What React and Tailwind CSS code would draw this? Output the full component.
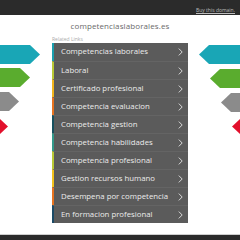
import React from 'react';

const links = [
  { label: 'Competencias laborales', color: '#1a9fae' },
  { label: 'Laboral', color: '#b9c935' },
  { label: 'Certificado profesional', color: '#f2b51c' },
  { label: 'Competencia evaluacion', color: '#e8731f' },
  { label: 'Competencia gestion', color: '#17505e' },
  { label: 'Competencia habilidades', color: '#33998a' },
  { label: 'Competencia profesional', color: '#b9c935' },
  { label: 'Gestion recursos humano', color: '#f2c21c' },
  { label: 'Desempena por competencia', color: '#e8731f' },
  { label: 'En formacion profesional', color: '#1b4a66' },
];

function Arrows() {
  const left = [
    { y: 45, tip: 40, c: '#19a6b6' },
    { y: 68, tip: 30, c: '#5aac2e' },
    { y: 92, tip: 19, c: '#8b8b8b' },
    { y: 117, tip: 8, c: '#e2102c' },
  ];
  const right = [
    { y: 45, tip: 199, c: '#19a6b6' },
    { y: 69, tip: 210, c: '#5aac2e' },
    { y: 93, tip: 221, c: '#8b8b8b' },
    { y: 117, tip: 232, c: '#e2102c' },
  ];
  const h = 19;
  return (
    <svg className="absolute inset-0 pointer-events-none" width="240" height="240" viewBox="0 0 240 240">
      {left.map((a) => (
        <polygon
          key={'l' + a.y}
          fill={a.c}
          points={`-20,${a.y} ${a.tip - 10},${a.y} ${a.tip},${a.y + h / 2} ${a.tip - 10},${a.y + h} -20,${a.y + h}`}
        />
      ))}
      {right.map((a) => (
        <polygon
          key={'r' + a.y}
          fill={a.c}
          points={`260,${a.y} ${a.tip + 10},${a.y} ${a.tip},${a.y + h / 2} ${a.tip + 10},${a.y + h} 260,${a.y + h}`}
        />
      ))}
    </svg>
  );
}

function Chevron() {
  return (
    <svg width="5" height="8" viewBox="0 0 5 8" fill="none" stroke="#d8d8d8" strokeWidth="1">
      <path d="M0.8 0.6 L4.2 4 L0.8 7.4" />
    </svg>
  );
}

export default function App() {
  return (
    <div
      className="relative w-[240px] h-[240px] bg-white overflow-hidden flex flex-col"
      style={{ fontFamily: '"Open Sans", "Liberation Sans", sans-serif' }}
    >
      <Arrows />
      <div className="relative h-[15px] bg-[#2b2b2b] flex justify-end items-end pr-[5px] pb-[2px]">
        <span className="text-[5px] leading-none text-[#bdbdbd] underline">Buy this domain.</span>
      </div>
      <div className="relative flex-1 flex flex-col items-center">
        <div className="mt-[5px] text-[8px] leading-[12px] text-[#6a6a6a] tracking-[0.1px]">
          competenciaslaborales.es
        </div>
        <div className="w-[136px] mt-[4px]">
          <div className="text-[5px] leading-[6px] text-[#aaaaaa]">Related Links</div>
          <div className="mt-[1px] bg-[#5b5b5b] flex flex-col">
            {links.map((l, i) => (
              <div
                key={l.label}
                className={`h-[18px] flex items-center border-l-[2px] pl-[7px] pr-[5px] ${i > 0 ? 'border-t border-t-[#646464]' : ''}`}
                style={{ borderLeftColor: l.color }}
              >
                <span className="flex-1 text-[7.8px] leading-none text-[#ececec] whitespace-nowrap">{l.label}</span>
                <Chevron />
              </div>
            ))}
          </div>
        </div>
      </div>
      <div className="relative h-[6px] bg-[#2b2b2b] border-t border-t-[#cfcfcf]"></div>
    </div>
  );
}
